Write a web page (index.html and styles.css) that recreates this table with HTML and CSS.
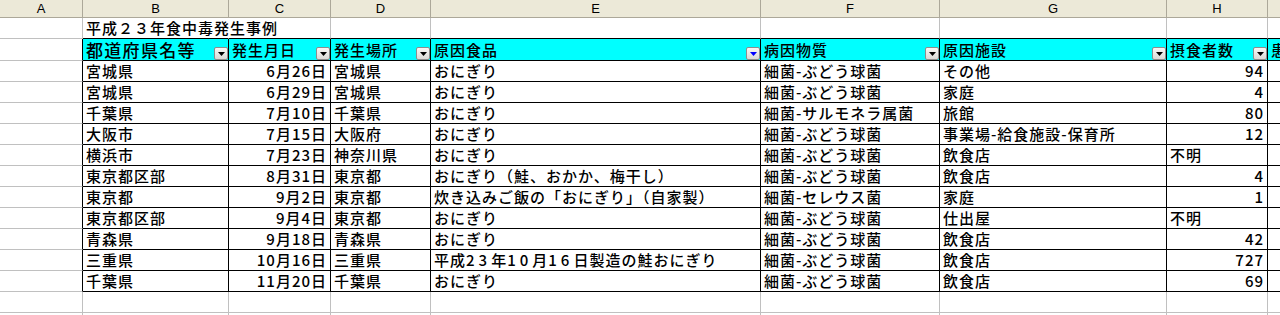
FILE: index.html
```html
<!DOCTYPE html>
<html lang="ja">
<head>
<meta charset="utf-8">
<title>平成23年食中毒発生事例</title>
<link rel="stylesheet" href="styles.css">
</head>
<body>
<div class="sheet">
  <!-- column header strip -->
  <div class="ch">A</div><div class="ch">B</div><div class="ch">C</div><div class="ch">D</div><div class="ch">E</div><div class="ch">F</div><div class="ch">G</div><div class="ch">H</div><div class="ch"></div>

  <!-- title row -->
  <div class="c"></div>
  <div class="c tt title">平成２３年食中毒発生事例</div>
  <div class="c tt"></div><div class="c tt"></div><div class="c tt"></div><div class="c tt"></div><div class="c tt"></div><div class="c tt"></div><div class="c tt"></div>

  <!-- header row -->
  <div class="c al"></div>
  <div class="c t hd"><span class="wide">都道府県名等</span><span class="dd"><svg width="7" height="4" viewBox="0 0 7 4"><path d="M0 0h7L3.5 4z"/></svg></span></div>
  <div class="c t hd"><span>発生月日</span><span class="dd"><svg width="7" height="4" viewBox="0 0 7 4"><path d="M0 0h7L3.5 4z"/></svg></span></div>
  <div class="c t hd"><span>発生場所</span><span class="dd"><svg width="7" height="4" viewBox="0 0 7 4"><path d="M0 0h7L3.5 4z"/></svg></span></div>
  <div class="c t hd"><span>原因食品</span><span class="dd active"><svg width="7" height="4" viewBox="0 0 7 4"><path d="M0 0h7L3.5 4z"/></svg></span></div>
  <div class="c t hd"><span>病因物質</span><span class="dd"><svg width="7" height="4" viewBox="0 0 7 4"><path d="M0 0h7L3.5 4z"/></svg></span></div>
  <div class="c t hd"><span>原因施設</span><span class="dd"><svg width="7" height="4" viewBox="0 0 7 4"><path d="M0 0h7L3.5 4z"/></svg></span></div>
  <div class="c t hd"><span>摂食者数</span><span class="dd"><svg width="7" height="4" viewBox="0 0 7 4"><path d="M0 0h7L3.5 4z"/></svg></span></div>
  <div class="c t hd"><span>患者数</span><span class="dd"><svg width="7" height="4" viewBox="0 0 7 4"><path d="M0 0h7L3.5 4z"/></svg></span></div>

  <!-- data rows -->
  <div class="c al"></div><div class="c t">宮城県</div><div class="c t r">6月26日</div><div class="c t">宮城県</div><div class="c t">おにぎり</div><div class="c t">細菌-ぶどう球菌</div><div class="c t">その他</div><div class="c t r">94</div><div class="c t r"></div>
  <div class="c al"></div><div class="c t">宮城県</div><div class="c t r">6月29日</div><div class="c t">宮城県</div><div class="c t">おにぎり</div><div class="c t">細菌-ぶどう球菌</div><div class="c t">家庭</div><div class="c t r">4</div><div class="c t r"></div>
  <div class="c al"></div><div class="c t">千葉県</div><div class="c t r">7月10日</div><div class="c t">千葉県</div><div class="c t">おにぎり</div><div class="c t">細菌-サルモネラ属菌</div><div class="c t">旅館</div><div class="c t r">80</div><div class="c t r"></div>
  <div class="c al"></div><div class="c t">大阪市</div><div class="c t r">7月15日</div><div class="c t">大阪府</div><div class="c t">おにぎり</div><div class="c t">細菌-ぶどう球菌</div><div class="c t">事業場-給食施設-保育所</div><div class="c t r">12</div><div class="c t r"></div>
  <div class="c al"></div><div class="c t">横浜市</div><div class="c t r">7月23日</div><div class="c t">神奈川県</div><div class="c t">おにぎり</div><div class="c t">細菌-ぶどう球菌</div><div class="c t">飲食店</div><div class="c t">不明</div><div class="c t r"></div>
  <div class="c al"></div><div class="c t">東京都区部</div><div class="c t r">8月31日</div><div class="c t">東京都</div><div class="c t">おにぎり（鮭、おかか、梅干し）</div><div class="c t">細菌-ぶどう球菌</div><div class="c t">飲食店</div><div class="c t r">4</div><div class="c t r"></div>
  <div class="c al"></div><div class="c t">東京都</div><div class="c t r">9月2日</div><div class="c t">東京都</div><div class="c t">炊き込みご飯の「おにぎり」（自家製）</div><div class="c t">細菌-セレウス菌</div><div class="c t">家庭</div><div class="c t r">1</div><div class="c t r"></div>
  <div class="c al"></div><div class="c t">東京都区部</div><div class="c t r">9月4日</div><div class="c t">東京都</div><div class="c t">おにぎり</div><div class="c t">細菌-ぶどう球菌</div><div class="c t">仕出屋</div><div class="c t">不明</div><div class="c t r"></div>
  <div class="c al"></div><div class="c t">青森県</div><div class="c t r">9月18日</div><div class="c t">青森県</div><div class="c t">おにぎり</div><div class="c t">細菌-ぶどう球菌</div><div class="c t">飲食店</div><div class="c t r">42</div><div class="c t r"></div>
  <div class="c al"></div><div class="c t">三重県</div><div class="c t r">10月16日</div><div class="c t">三重県</div><div class="c t">平成<span class="dg">23</span>年<span class="dg">10</span>月<span class="dg">16</span>日製造の鮭おにぎり</div><div class="c t">細菌-ぶどう球菌</div><div class="c t">飲食店</div><div class="c t r">727</div><div class="c t r"></div>
  <div class="c al"></div><div class="c t">千葉県</div><div class="c t r">11月20日</div><div class="c t">千葉県</div><div class="c t">おにぎり</div><div class="c t">細菌-ぶどう球菌</div><div class="c t">飲食店</div><div class="c t r">69</div><div class="c t r"></div>

  <!-- empty rows -->
  <div class="c"></div><div class="c"></div><div class="c"></div><div class="c"></div><div class="c"></div><div class="c"></div><div class="c"></div><div class="c"></div><div class="c"></div>
  <div class="c"></div><div class="c"></div><div class="c"></div><div class="c"></div><div class="c"></div><div class="c"></div><div class="c"></div><div class="c"></div><div class="c"></div>
</div>
</body>
</html>
```

FILE: styles.css
```css
html, body {
  margin: 0;
  padding: 0;
  background: #ffffff;
  overflow: hidden;
}

.sheet {
  display: grid;
  grid-template-columns: 83px 146px 102px 100px 330px 179px 227px 101px 150px;
  grid-template-rows: 18px 21px 22px repeat(13, 21px);
  width: max-content;
  font-family: "Noto Sans CJK JP", sans-serif;
  font-size: 15px;
  font-weight: 500;
  letter-spacing: 1px;
  color: #000;
}

.ch {
  box-sizing: border-box;
  background: #ece9d8;
  border-right: 1px solid #aca899;
  border-bottom: 1px solid #aca899;
  display: flex;
  align-items: center;
  justify-content: center;
  padding-top: 1px;
  font-family: "Liberation Sans", Arial, sans-serif;
  font-size: 13px;
  font-weight: normal;
  letter-spacing: 0;
  line-height: 16px;
}

.c {
  box-sizing: border-box;
  border-right: 1px solid #c0c0c0;
  border-bottom: 1px solid #c0c0c0;
  padding: 0 3px;
  line-height: 20px;
  white-space: nowrap;
  overflow: hidden;
  display: flex;
  align-items: flex-end;
}

.title {
  overflow: visible;
  border-right-color: transparent;
}

.tt {
  border-bottom-color: #000;
}

.al {
  border-right-color: #000;
}

.t {
  border-right-color: #000;
  border-bottom-color: #000;
}

.r {
  justify-content: flex-end;
}

.dg {
  letter-spacing: 4px;
}

.hd {
  background: #00ffff;
  justify-content: space-between;
  padding-right: 0;
  overflow: visible;
}

.wide {
  font-size: 17px;
  letter-spacing: 1.3px;
  line-height: 20px;
}

.dd {
  box-sizing: border-box;
  flex: none;
  width: 14px;
  height: 13px;
  border: 1px solid #8e8e8e;
  border-radius: 2px;
  background: linear-gradient(#f8f8f6, #dadad6);
  display: flex;
  align-items: center;
  justify-content: center;
}

.dd svg {
  display: block;
  fill: #000;
  margin-top: 1px;
}

.dd.active svg {
  fill: #0000ff;
}
```
